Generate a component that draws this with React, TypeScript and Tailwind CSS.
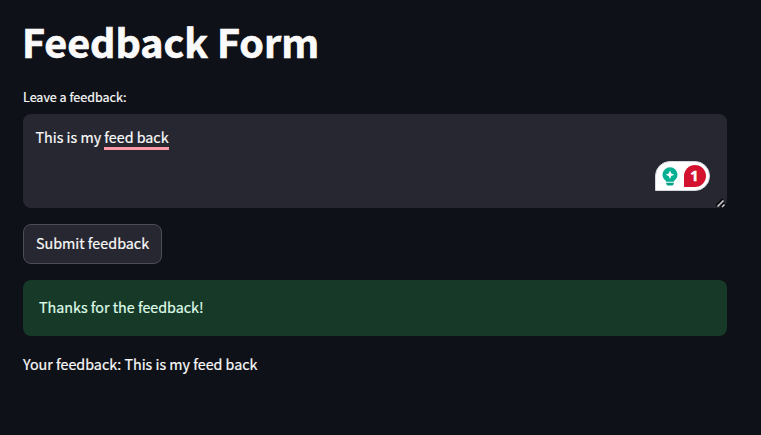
import { useState } from "react";

export default function App() {
  const [submitted, setSubmitted] = useState("This is my feed back");

  return (
    <main className="min-h-screen bg-[#0e1117] pt-[14px] pr-[34px] pl-[23px] font-['Noto_Sans_CJK_SC','Noto_Sans',sans-serif] text-[14.3px] text-[#fafafa] [-webkit-text-stroke:0.2px]">
      <h1 className="-ml-px h-[53px] text-[39.4px] leading-[53px] font-bold whitespace-nowrap [-webkit-text-stroke:0.7px]">
        Feedback Form
      </h1>
      <div className="mt-[19px] h-[21px] text-[12.5px] leading-[21px]">Leave a feedback:</div>

      <FeedbackBox />

      <button
        onClick={() => setSubmitted("This is my feed back")}
        className="mt-4 flex h-10 w-[139px] items-center justify-center rounded-lg border border-[#4c4d56] bg-[#262730] pb-[2px] text-[14.35px] whitespace-nowrap"
      >
        Submit feedback
      </button>

      <div className="mt-4 flex h-14 items-center rounded-lg bg-[#173928] px-4 pb-[2px] text-[#dffde9]">
        Thanks for the feedback!
      </div>

      <p className="mt-[15px] leading-[26px]">Your feedback: {submitted}</p>
    </main>
  );
}

function FeedbackBox() {
  return (
    <div className="relative mt-[7px] h-[94px] rounded-lg bg-[#262730] px-[13px] pt-[11px]">
      <div className="-ml-[0.5px] flex h-6 leading-6 whitespace-pre">
        <span>This is my </span>
        <span className="box-content h-[22px] border-b-3 border-[#ff9aa8]">feed back</span>
      </div>
      <GrammarBadge />
      <ResizeHandle />
    </div>
  );
}

function GrammarBadge() {
  return (
    <div className="absolute right-[17px] bottom-[17px] flex h-[30px] w-[55px] items-center rounded-[15px] rounded-bl-none border border-[#d5d7de] bg-white pl-[6px]">
      <svg width="16" height="19" viewBox="0 0 16 19" fill="none">
        <path
          d="M8 .3a7.5 7.5 0 0 0-7.5 7.5c0 2.9 1.6 4.7 3.5 6.1v.9h8v-.9c1.9-1.4 3.5-3.2 3.5-6.1A7.5 7.5 0 0 0 8 .3Z"
          fill="#06b093"
        />
        <path d="M8 3.5 9.3 6.5 12.3 7.8 9.3 9.1 8 12.1 6.7 9.1 3.7 7.8 6.7 6.5Z" fill="white" />
        <path d="M4.2 15.8h7.6v.7c0 1.1-.8 1.9-1.8 1.9H6c-1 0-1.8-.8-1.8-1.9Z" fill="#06a088" />
      </svg>
      <span className="ml-[6px] flex size-[22px] items-center justify-center rounded-full rounded-bl-none bg-[#d3122f] pr-px font-['Open_Sans',sans-serif] text-[14.5px] leading-none font-bold text-white [-webkit-text-stroke:0.4px]">
        1
      </span>
    </div>
  );
}

function ResizeHandle() {
  return (
    <svg className="absolute right-[1px] bottom-0" width="10" height="10" viewBox="0 0 10 10">
      <path d="M0 8 7 1M4.5 9 8.5 5" stroke="#0b0b0e" strokeWidth="2.2" />
      <path d="M1.5 8.5 7.5 2.5M6 9 8.5 6.5" stroke="#d0d0d4" strokeWidth="1.5" />
    </svg>
  );
}
